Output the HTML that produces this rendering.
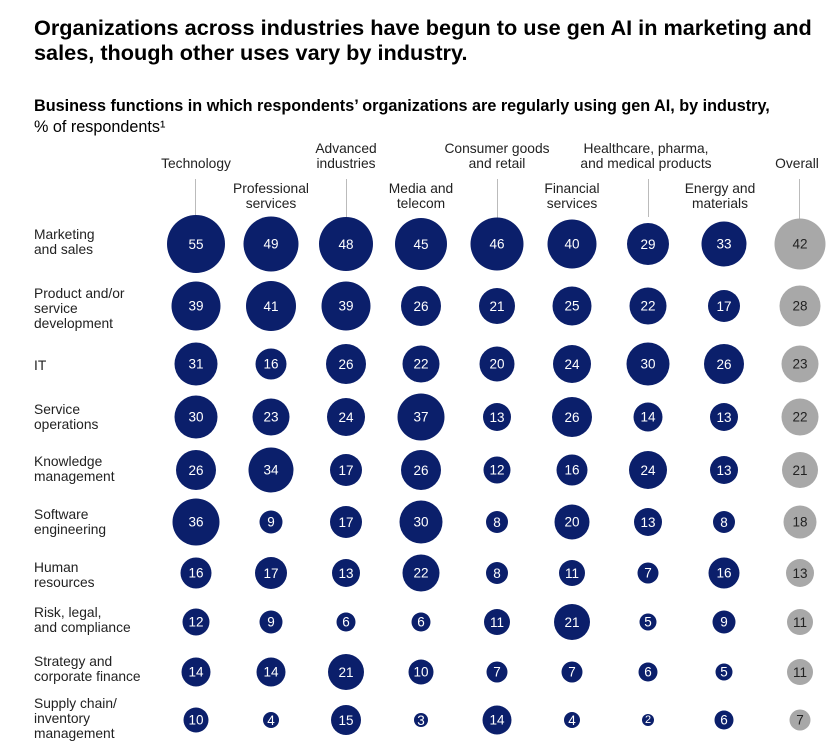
<!DOCTYPE html><html><head><meta charset="utf-8"><style>
body{margin:0;width:836px;height:743px;background:#fff;font-family:"Liberation Sans",sans-serif;color:#222;position:relative;overflow:hidden}
.a{position:absolute}
.t{left:34px;top:15px;font-size:21.7px;font-weight:bold;line-height:25px;color:#000}
.s{left:34px;top:96px;font-size:16.2px;line-height:21px;color:#000}
.h{position:absolute;font-size:13.8px;line-height:15px;text-align:center;transform:translateX(-50%);white-space:nowrap;color:#222}
.r{position:absolute;left:34px;font-size:13.8px;line-height:15px;color:#222}
.l{position:absolute;width:1px;background:#bbb;top:179px}
.c{position:absolute;border-radius:50%;background:#0b1f6b;color:#fff;font-size:13.5px;display:flex;align-items:center;justify-content:center;transform:translate(-50%,-50%)}
.g{background:#a8a8a8;color:#222}
</style></head><body>
<div class="a t">Organizations across industries have begun to use gen AI in marketing and<br>sales, though other uses vary by industry.</div>
<div class="a s"><b>Business functions in which respondents’ organizations are regularly using gen AI, by industry,</b><br>% of respondents¹</div>
<div class="h" style="left:196px;top:156px">Technology</div>
<div class="h" style="left:271px;top:181px">Professional<br>services</div>
<div class="h" style="left:346px;top:141px">Advanced<br>industries</div>
<div class="h" style="left:421px;top:181px">Media and<br>telecom</div>
<div class="h" style="left:497px;top:141px">Consumer goods<br>and retail</div>
<div class="h" style="left:572px;top:181px">Financial<br>services</div>
<div class="h" style="left:646px;top:141px">Healthcare, pharma,<br>and medical products</div>
<div class="h" style="left:720px;top:181px">Energy and<br>materials</div>
<div class="h" style="left:797px;top:156px">Overall</div>
<div class="l" style="left:195px;height:38px"></div>
<div class="l" style="left:346px;height:40px"></div>
<div class="l" style="left:497px;height:40px"></div>
<div class="l" style="left:648px;height:38px"></div>
<div class="l" style="left:799px;height:40px"></div>
<div class="r" style="top:227px">Marketing<br>and sales</div>
<div class="r" style="top:286px">Product and/or<br>service<br>development</div>
<div class="r" style="top:358px">IT</div>
<div class="r" style="top:402px">Service<br>operations</div>
<div class="r" style="top:454px">Knowledge<br>management</div>
<div class="r" style="top:507px">Software<br>engineering</div>
<div class="r" style="top:560px">Human<br>resources</div>
<div class="r" style="top:605px">Risk, legal,<br>and compliance</div>
<div class="r" style="top:654px">Strategy and<br>corporate finance</div>
<div class="r" style="top:696px">Supply chain/<br>inventory<br>management</div>

<div class="c" style="left:196px;top:244px;width:58px;height:58px">55</div>
<div class="c" style="left:271px;top:244px;width:55px;height:55px">49</div>
<div class="c" style="left:346px;top:244px;width:54px;height:54px">48</div>
<div class="c" style="left:421px;top:244px;width:52px;height:52px">45</div>
<div class="c" style="left:497px;top:244px;width:53px;height:53px">46</div>
<div class="c" style="left:572px;top:244px;width:49px;height:49px">40</div>
<div class="c" style="left:648px;top:244px;width:42px;height:42px">29</div>
<div class="c" style="left:724px;top:244px;width:45px;height:45px">33</div>
<div class="c g" style="left:800px;top:244px;width:51px;height:51px">42</div>

<div class="c" style="left:196px;top:306px;width:49px;height:49px">39</div>
<div class="c" style="left:271px;top:306px;width:50px;height:50px">41</div>
<div class="c" style="left:346px;top:306px;width:49px;height:49px">39</div>
<div class="c" style="left:421px;top:306px;width:40px;height:40px">26</div>
<div class="c" style="left:497px;top:306px;width:36px;height:36px">21</div>
<div class="c" style="left:572px;top:306px;width:39px;height:39px">25</div>
<div class="c" style="left:648px;top:306px;width:37px;height:37px">22</div>
<div class="c" style="left:724px;top:306px;width:32px;height:32px">17</div>
<div class="c g" style="left:800px;top:306px;width:41px;height:41px">28</div>

<div class="c" style="left:196px;top:364px;width:43px;height:43px">31</div>
<div class="c" style="left:271px;top:364px;width:31px;height:31px">16</div>
<div class="c" style="left:346px;top:364px;width:40px;height:40px">26</div>
<div class="c" style="left:421px;top:364px;width:37px;height:37px">22</div>
<div class="c" style="left:497px;top:364px;width:35px;height:35px">20</div>
<div class="c" style="left:572px;top:364px;width:38px;height:38px">24</div>
<div class="c" style="left:648px;top:364px;width:43px;height:43px">30</div>
<div class="c" style="left:724px;top:364px;width:40px;height:40px">26</div>
<div class="c g" style="left:800px;top:364px;width:37px;height:37px">23</div>

<div class="c" style="left:196px;top:417px;width:43px;height:43px">30</div>
<div class="c" style="left:271px;top:417px;width:37px;height:37px">23</div>
<div class="c" style="left:346px;top:417px;width:38px;height:38px">24</div>
<div class="c" style="left:421px;top:417px;width:47px;height:47px">37</div>
<div class="c" style="left:497px;top:417px;width:28px;height:28px">13</div>
<div class="c" style="left:572px;top:417px;width:40px;height:40px">26</div>
<div class="c" style="left:648px;top:417px;width:29px;height:29px">14</div>
<div class="c" style="left:724px;top:417px;width:28px;height:28px">13</div>
<div class="c g" style="left:800px;top:417px;width:37px;height:37px">22</div>

<div class="c" style="left:196px;top:470px;width:40px;height:40px">26</div>
<div class="c" style="left:271px;top:470px;width:45px;height:45px">34</div>
<div class="c" style="left:346px;top:470px;width:32px;height:32px">17</div>
<div class="c" style="left:421px;top:470px;width:40px;height:40px">26</div>
<div class="c" style="left:497px;top:470px;width:27px;height:27px">12</div>
<div class="c" style="left:572px;top:470px;width:31px;height:31px">16</div>
<div class="c" style="left:648px;top:470px;width:38px;height:38px">24</div>
<div class="c" style="left:724px;top:470px;width:28px;height:28px">13</div>
<div class="c g" style="left:800px;top:470px;width:36px;height:36px">21</div>

<div class="c" style="left:196px;top:522px;width:47px;height:47px">36</div>
<div class="c" style="left:271px;top:522px;width:23px;height:23px">9</div>
<div class="c" style="left:346px;top:522px;width:32px;height:32px">17</div>
<div class="c" style="left:421px;top:522px;width:43px;height:43px">30</div>
<div class="c" style="left:497px;top:522px;width:22px;height:22px">8</div>
<div class="c" style="left:572px;top:522px;width:35px;height:35px">20</div>
<div class="c" style="left:648px;top:522px;width:28px;height:28px">13</div>
<div class="c" style="left:724px;top:522px;width:22px;height:22px">8</div>
<div class="c g" style="left:800px;top:522px;width:33px;height:33px">18</div>

<div class="c" style="left:196px;top:573px;width:31px;height:31px">16</div>
<div class="c" style="left:271px;top:573px;width:32px;height:32px">17</div>
<div class="c" style="left:346px;top:573px;width:28px;height:28px">13</div>
<div class="c" style="left:421px;top:573px;width:37px;height:37px">22</div>
<div class="c" style="left:497px;top:573px;width:22px;height:22px">8</div>
<div class="c" style="left:572px;top:573px;width:26px;height:26px">11</div>
<div class="c" style="left:648px;top:573px;width:21px;height:21px">7</div>
<div class="c" style="left:724px;top:573px;width:31px;height:31px">16</div>
<div class="c g" style="left:800px;top:573px;width:28px;height:28px">13</div>

<div class="c" style="left:196px;top:622px;width:27px;height:27px">12</div>
<div class="c" style="left:271px;top:622px;width:23px;height:23px">9</div>
<div class="c" style="left:346px;top:622px;width:19px;height:19px">6</div>
<div class="c" style="left:421px;top:622px;width:19px;height:19px">6</div>
<div class="c" style="left:497px;top:622px;width:26px;height:26px">11</div>
<div class="c" style="left:572px;top:622px;width:36px;height:36px">21</div>
<div class="c" style="left:648px;top:622px;width:17px;height:17px">5</div>
<div class="c" style="left:724px;top:622px;width:23px;height:23px">9</div>
<div class="c g" style="left:800px;top:622px;width:26px;height:26px">11</div>

<div class="c" style="left:196px;top:672px;width:29px;height:29px">14</div>
<div class="c" style="left:271px;top:672px;width:29px;height:29px">14</div>
<div class="c" style="left:346px;top:672px;width:36px;height:36px">21</div>
<div class="c" style="left:421px;top:672px;width:25px;height:25px">10</div>
<div class="c" style="left:497px;top:672px;width:21px;height:21px">7</div>
<div class="c" style="left:572px;top:672px;width:21px;height:21px">7</div>
<div class="c" style="left:648px;top:672px;width:19px;height:19px">6</div>
<div class="c" style="left:724px;top:672px;width:17px;height:17px">5</div>
<div class="c g" style="left:800px;top:672px;width:26px;height:26px">11</div>

<div class="c" style="left:196px;top:720px;width:25px;height:25px">10</div>
<div class="c" style="left:271px;top:720px;width:16px;height:16px">4</div>
<div class="c" style="left:346px;top:720px;width:30px;height:30px">15</div>
<div class="c" style="left:421px;top:720px;width:14px;height:14px">3</div>
<div class="c" style="left:497px;top:720px;width:29px;height:29px">14</div>
<div class="c" style="left:572px;top:720px;width:16px;height:16px">4</div>
<div class="c" style="left:648px;top:720px;width:12px;height:12px;font-size:11px">2</div>
<div class="c" style="left:724px;top:720px;width:19px;height:19px">6</div>
<div class="c g" style="left:800px;top:720px;width:21px;height:21px">7</div>
</body></html>
